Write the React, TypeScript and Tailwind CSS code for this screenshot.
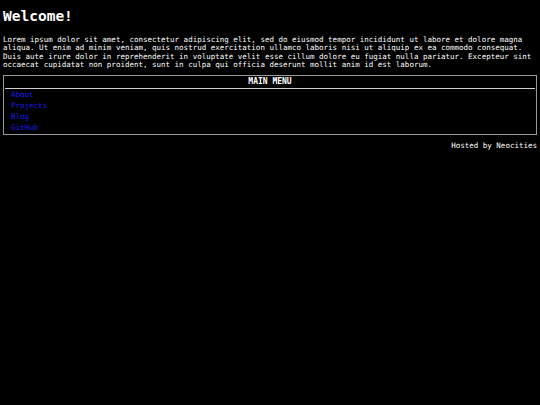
import React from 'react';

const links = ['About', 'Projects', 'Blog', 'GitHub'];

const App: React.FC = () => {
  return (
    <div className="min-h-[405px] bg-black text-white px-[3px] pt-[8px] font-['DejaVu_Sans_Mono',monospace]">
      <h1 className="text-[14.5px] font-bold leading-[16px]">Welcome!</h1>

      <p className="mt-[12px] text-[7.5px] leading-[8.4px]">
        Lorem ipsum dolor sit amet, consectetur adipiscing elit, sed do eiusmod tempor incididunt ut labore et dolore magna
        aliqua. Ut enim ad minim veniam, quis nostrud exercitation ullamco laboris nisi ut aliquip ex ea commodo consequat.
        Duis aute irure dolor in reprehenderit in voluptate velit esse cillum dolore eu fugiat nulla pariatur. Excepteur sint
        occaecat cupidatat non proident, sunt in culpa qui officia deserunt mollit anim id est laborum.
      </p>

      {/* Main menu table */}
      <div className="mt-[5px] w-[534px] border border-[#9a9a9a] p-px">
        <div className="border-b border-[#d0d0d0] h-[12px] flex items-center justify-center text-[8px] font-bold leading-none">
          MAIN MENU
        </div>
        <div className="flex flex-col pl-[6px]">
          {links.map((l) => (
            <a key={l} href="#" className="text-[7.5px] leading-[11.2px] text-[#1a1aee]">
              {l}
            </a>
          ))}
        </div>
      </div>

      <div className="mt-[6px] w-[534px] text-right text-[7.5px] leading-[9px]">Hosted by Neocities</div>
    </div>
  );
};

export default App;
